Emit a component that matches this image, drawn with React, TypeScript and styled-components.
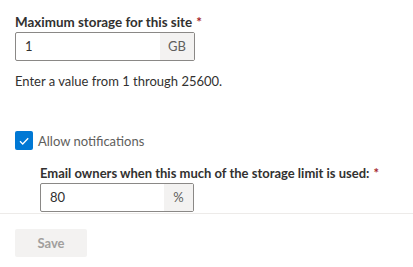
import React from "react";
import styled, { createGlobalStyle } from "styled-components";

const GlobalStyle = createGlobalStyle`
  html, body {
    margin: 0;
    padding: 0;
    background: #ffffff;
  }
  body {
    font-family: Lato, "Noto Sans", sans-serif;
    color: #323130;
    -webkit-font-smoothing: antialiased;
  }
`;

const Panel = styled.div`
  width: 413px;
  height: 267px;
  display: flex;
  flex-direction: column;
  background: #ffffff;
`;

const Content = styled.div`
  height: 213px;
  overflow: hidden;
  padding: 13px 15px 0;
  box-sizing: border-box;
`;

const Field = styled.div<{ $indent?: number }>`
  margin-left: ${(p) => p.$indent ?? 0}px;
`;

const Label = styled.div<{ $size?: number }>`
  font-size: ${(p) => p.$size ?? 13}px;
  font-weight: 700;
  line-height: 19px;
  color: #323130;
`;

const Required = styled.span`
  color: #a4262c;
  margin-left: 4px;
`;

const InputWrap = styled.div<{ $width: number }>`
  width: ${(p) => p.$width}px;
  height: 29px;
  box-sizing: border-box;
  border: 1px solid #8a8886;
  border-radius: 2px;
  display: flex;
  background: #fff;
`;

const Input = styled.div`
  flex: 1;
  padding: 0 9px;
  font-size: 13px;
  line-height: 27px;
  color: #323130;
`;

const Suffix = styled.div<{ $width: number }>`
  width: ${(p) => p.$width}px;
  background: #f3f2f1;
  color: #605e5c;
  font-size: 13px;
  line-height: 27px;
  text-align: center;
`;

const Helper = styled.div`
  font-size: 13px;
  line-height: 18px;
  margin-top: 11px;
  color: #323130;
`;

const CheckRow = styled.label`
  display: flex;
  align-items: center;
  gap: 5px;
  margin-top: 41px;
  font-size: 13px;
  color: #605e5c;
`;

const Box = styled.span`
  width: 18px;
  height: 19px;
  border-radius: 2px;
  background: #0078d4;
  display: flex;
  align-items: center;
  justify-content: center;
`;

const SubField = styled(Field)`
  margin-top: 14px;
`;

const Footer = styled.div`
  flex: 1;
  border-top: 1px solid #edebe9;
  padding: 15px 15px 0;
`;

const SaveButton = styled.button`
  width: 72px;
  height: 28px;
  border: none;
  border-radius: 2px;
  background: #f3f2f1;
  color: #a19f9d;
  font-family: inherit;
  font-size: 13px;
  font-weight: 700;
  padding: 0;
`;

const App = () => {
  return (
    <>
      <GlobalStyle />
      <Panel>
        <Content>
          <Field>
            <Label $size={13.4}>
              Maximum storage for this site<Required>*</Required>
            </Label>
            <InputWrap $width={180}>
              <Input>1</Input>
              <Suffix $width={34}>GB</Suffix>
            </InputWrap>
            <Helper>Enter a value from 1 through 25600.</Helper>
          </Field>
          <CheckRow>
            <Box>
              <svg width="12" height="12" viewBox="0 0 12 12">
                <path
                  d="M2 6.3 L4.7 9 L10.2 3.2"
                  fill="none"
                  stroke="#fff"
                  strokeWidth="1.3"
                />
              </svg>
            </Box>
            Allow notifications
          </CheckRow>
          <SubField $indent={25}>
            <Label>
              Email owners when this much of the storage limit is used:
              <Required>*</Required>
            </Label>
            <InputWrap $width={154}>
              <Input>80</Input>
              <Suffix $width={29}>%</Suffix>
            </InputWrap>
          </SubField>
        </Content>
        <Footer>
          <SaveButton disabled>Save</SaveButton>
        </Footer>
      </Panel>
    </>
  );
};

export default App;
